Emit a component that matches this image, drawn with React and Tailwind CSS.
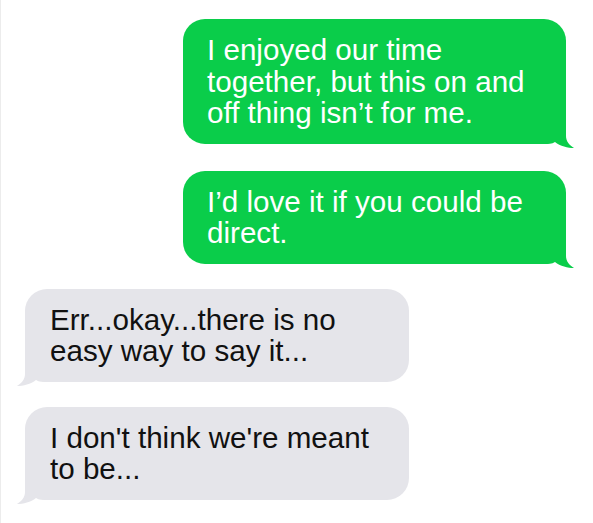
export default function App() {
  const font = { fontFamily: '"Liberation Sans", Arial, sans-serif' };
  const tailPath = "M26 2 L26 27 C26 32 29 36 34 39 C28 39 20 37 15 33 C12 35 8 35 4 35 L4 2 Z";
  const Out = ({ children }) => (
    <div className="relative self-end w-[383px] rounded-[22px] bg-[#0acd4a] pl-[24px] pr-[14px] py-[15px] text-white text-[29.6px] leading-[31.5px]">
      <span className="relative z-10">{children}</span>
      <svg className="absolute right-[-10px] bottom-[-7px]" width="36" height="42" viewBox="0 0 36 42">
        <path d={tailPath} fill="#0acd4a" />
      </svg>
    </div>
  );
  const In = ({ children }) => (
    <div className="relative self-start w-[384px] rounded-[22px] bg-[#e5e5ea] pl-[25px] pr-[14px] py-[15px] text-[#111111] text-[29.6px] leading-[31.5px]">
      <span className="relative z-10">{children}</span>
      <svg className="absolute left-[-10px] bottom-[-7px] -scale-x-100" width="36" height="42" viewBox="0 0 36 42">
        <path d={tailPath} fill="#e5e5ea" />
      </svg>
    </div>
  );
  return (
    <div style={font} className="w-[593px] h-[523px] bg-white border-l border-[#ececec] flex flex-col pt-[19px] pl-[24px] pr-[27px] gap-[27px] overflow-hidden">
      <Out>I enjoyed our time together, but this on and off thing isn’t for me.</Out>
      <Out>I’d love it if you could be direct.</Out>
      <div className="-mt-[2px] flex flex-col">
        <In>Err...okay...there is no easy way to say it...</In>
      </div>
      <div className="-mt-[2px] flex flex-col">
        <In>I don't think we're meant to be...</In>
      </div>
    </div>
  );
}
